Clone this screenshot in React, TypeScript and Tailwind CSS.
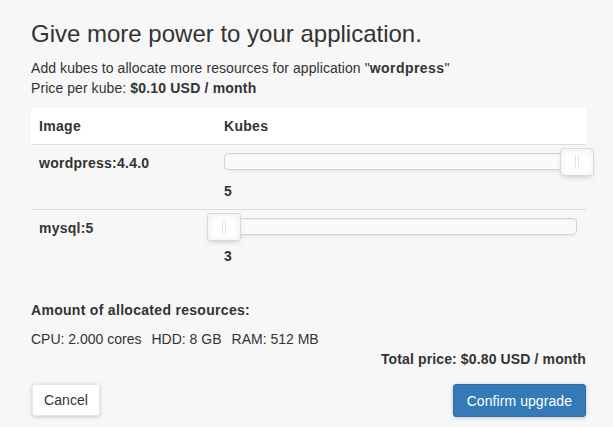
import React from 'react';

const containers = [
  { image: 'wordpress:4.4.0', kubes: 5, atMax: true },
  { image: 'mysql:5', kubes: 3, atMax: false },
];

function KubeSlider({ atMax }: { atMax: boolean }) {
  return (
    <div className="relative h-[17px] rounded-[4px] border border-[#d3d3d3] bg-[#fafafa] shadow-[inset_0_1px_1px_#f0f0f0,0_3px_6px_-5px_#bbb]">
      <div
        className={
          'absolute top-[-6px] h-[28px] w-[34px] rounded-[3px] border border-[#d9d9d9] bg-white shadow-[inset_0_0_1px_#fff,inset_0_1px_7px_#ebebeb,0_3px_6px_-3px_#bbb] ' +
          (atMax ? 'right-[-18px]' : 'left-[-18px]')
        }
      >
        <span className="absolute left-[14px] top-[6px] h-[14px] w-px bg-[#e8e7e6]" />
        <span className="absolute left-[17px] top-[6px] h-[14px] w-px bg-[#e8e7e6]" />
      </div>
    </div>
  );
}

export default function App() {
  return (
    <div className="h-[427px] w-[613px] overflow-hidden bg-[#f7f7f7] pl-[31px] pr-[27px] pt-[21px] font-['Liberation_Sans',Arial,sans-serif] text-[14px] leading-[20px] tracking-[0.07px] text-[#333]">
      {/* HEADER */}
      <h3 className="text-[24px] leading-[26px] tracking-normal">Give more power to your application.</h3>
      <p className="mt-[11px]">
        Add kubes to allocate more resources for application "<b className="tracking-[0.45px]">wordpress</b>"
      </p>
      <p>
        Price per kube: <b className="tracking-[0.2px]">$0.10 USD / month</b>
      </p>

      {/* TABLE */}
      <div className="mt-[10px]">
        <div className="grid grid-cols-[185px_1fr] border-b border-[#ddd] bg-white font-bold tracking-[0.3px]">
          <div className="px-[8px] py-[8px]">Image</div>
          <div className="px-[8px] py-[8px]">Kubes</div>
        </div>
        {containers.map((c, i) => (
          <div
            key={c.image}
            className={'grid grid-cols-[185px_1fr] ' + (i === 0 ? 'border-b border-[#ddd]' : '')}
          >
            <div className="px-[8px] py-[8px] font-bold tracking-[0.25px]">{c.image}</div>
            <div className="pl-[8px] pr-[9px] pt-[8px] pb-[8px]">
              <KubeSlider atMax={c.atMax} />
              <div className="mt-[11px] font-bold">{c.kubes}</div>
            </div>
          </div>
        ))}
      </div>

      {/* RESOURCES */}
      <p className="mt-[26px] font-bold tracking-[0.3px]">Amount of allocated resources:</p>
      <div className="mt-[9px] flex gap-[10px] tracking-normal">
        <span>CPU: 2.000 cores</span>
        <span>HDD: 8 GB</span>
        <span>RAM: 512 MB</span>
      </div>
      <p className="text-right font-bold tracking-[0.13px]">Total price: $0.80 USD / month</p>

      {/* ACTIONS */}
      <div className="mt-[15px] flex items-start justify-between">
        <button className="ml-px h-[32px] rounded-[3px] border border-[#e8e8e8] bg-white px-[11px] text-[#333] shadow-[0_1px_4px_rgba(0,0,0,0.18)]">
          Cancel
        </button>
        <button className="h-[33px] rounded-[3px] border border-[#2e6da4] bg-[#337ab7] px-[13px] text-white shadow-[0_1px_4px_rgba(0,0,0,0.2)]">
          Confirm upgrade
        </button>
      </div>
    </div>
  );
}
